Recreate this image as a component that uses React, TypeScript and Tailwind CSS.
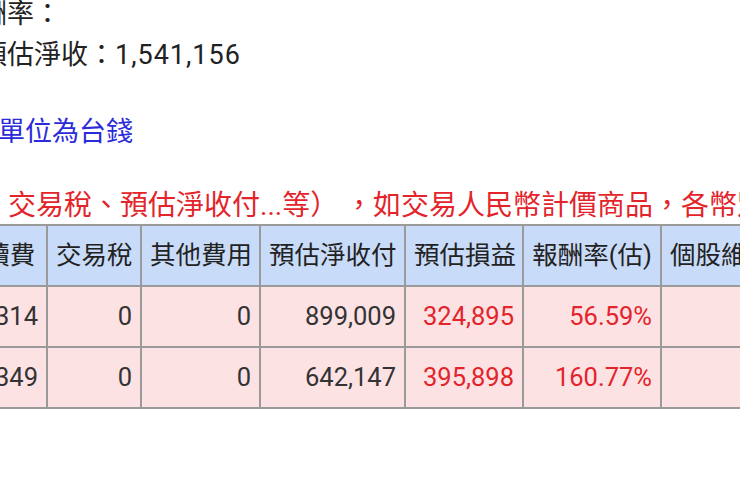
import React from "react";

const font = { fontFamily: '"Roboto", "Noto Sans CJK TC", sans-serif' };

const headers = ["手續費", "交易稅", "其他費用", "預估淨收付", "預估損益", "報酬率(估)", "個股維持率"];

const rows = [
  { fee: "1,314", tax: "0", other: "0", net: "899,009", pl: "324,895", rate: "56.59%" },
  { fee: "1,349", tax: "0", other: "0", net: "642,147", pl: "395,898", rate: "160.77%" },
];

const cell = "border-2 border-[#9a9a9a] pl-2 pr-[8px] text-right";

export default function App() {
  return (
    <div className="w-[740px] h-[500px] overflow-hidden bg-white text-[#222]" style={font}>
      <div className="-mt-[6px] -ml-[47px]">
        <p className="text-[27px] leading-[41px] whitespace-nowrap">報酬率：</p>
        <p className="text-[27px] leading-[41px] whitespace-nowrap">
          總預估淨收：<span className="tracking-[1px]">1,541,156</span>
        </p>
      </div>
      <p className="mt-[36px] -ml-[2px] text-[27px] leading-[41px] text-[#2b2bd9] whitespace-nowrap">單位為台錢</p>
      <p className="mt-[35px] ml-[8px] text-[28px] leading-[36px] text-[#e3242b] whitespace-nowrap">
        交易稅、預估淨收付...等） ，如交易人民幣計價商品，各幣別
      </p>
      <table className="w-[859px] -ml-[54px] table-fixed border-collapse text-[25.5px] whitespace-nowrap">
        <colgroup>
          <col className="w-[100px]" />
          <col className="w-[94px]" />
          <col className="w-[119px]" />
          <col className="w-[145px]" />
          <col className="w-[118px]" />
          <col className="w-[138px]" />
          <col className="w-[145px]" />
        </colgroup>
        <thead>
          <tr className="h-[61px] bg-[#c8dbf8]">
            {headers.map((h) => (
              <th key={h} className="border-2 border-[#9a9a9a] px-2 font-normal text-center overflow-hidden">
                {h}
              </th>
            ))}
          </tr>
        </thead>
        <tbody>
          {rows.map((r) => (
            <tr key={r.net} className="h-[61px] bg-[#fde2e4] text-[#333]">
              <td className={cell}>{r.fee}</td>
              <td className={cell}>{r.tax}</td>
              <td className={cell}>{r.other}</td>
              <td className={cell}>{r.net}</td>
              <td className={`${cell} text-[#e3242b]`}>{r.pl}</td>
              <td className={`${cell} text-[#e3242b]`}>{r.rate}</td>
              <td className={cell}></td>
            </tr>
          ))}
        </tbody>
      </table>
    </div>
  );
}
